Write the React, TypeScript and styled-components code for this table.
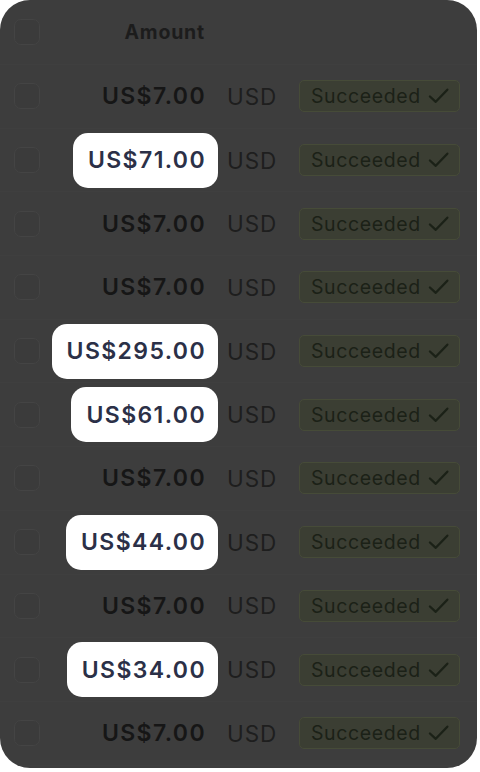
import React from "react";
import styled, { createGlobalStyle } from "styled-components";

const Global = createGlobalStyle`
  html, body { margin: 0; padding: 0; background: #ffffff; }
  body { font-family: Inter, "Noto Sans", "DejaVu Sans", sans-serif; }
`;

const Panel = styled.div`
  width: 477px;
  height: 768px;
  background: #3d3d3d;
  border-radius: 30px;
  overflow: hidden;
  display: flex;
  flex-direction: column;
`;

const Row = styled.div<{ $header?: boolean }>`
  display: grid;
  grid-template-columns: 26px 178px 81px 161px;
  align-items: center;
  padding-left: 14px;
  height: ${(p) => (p.$header ? "65px" : "63.7px")};
  flex: none;
  border-bottom: 1px solid #3f3f3f;
  box-sizing: border-box;
`;

const Check = styled.div`
  width: 26px;
  height: 26px;
  box-sizing: border-box;
  border: 1.5px solid #444444;
  border-radius: 7px;
  background: #3b3b3b;
`;

const AmountCell = styled.div`
  display: flex;
  justify-content: flex-end;
`;

const HeaderLabel = styled.span`
  font-size: 19.5px;
  font-weight: 700;
  color: #1c1c1c;
  padding-right: 13px;
  letter-spacing: 0.8px;
`;

const Amount = styled.span<{ $hi?: boolean }>`
  display: flex;
  align-items: center;
  height: 55px;
  padding: 0 12px 0 15px;
  border-radius: 15px;
  font-size: 23px;
  font-weight: 600;
  letter-spacing: 1.4px;
  color: ${(p) => (p.$hi ? "#2b3047" : "#161616")};
  background: ${(p) => (p.$hi ? "#ffffff" : "transparent")};
`;

const Currency = styled.span`
  padding-left: 9px;
  font-size: 22.5px;
  font-weight: 400;
  color: #1e1e1e;
  letter-spacing: 0.9px;
`;

const Badge = styled.span`
  display: inline-flex;
  align-items: center;
  gap: 7px;
  justify-self: start;
  height: 32px;
  width: 161px;
  box-sizing: border-box;
  padding: 0 10px 0 11px;
  border: 1px solid #464b38;
  border-radius: 5px;
  background: #3b3e33;
  color: #1b2117;
  font-size: 19.5px;
  font-weight: 400;
  letter-spacing: 0.6px;
`;

const CheckIcon = () => (
  <svg width="22" height="20" viewBox="0 0 22 20" fill="none">
    <path d="M2 10.5 L8 16 L20 3.5" stroke="#1b2117" strokeWidth="2.4" strokeLinecap="round" strokeLinejoin="round" />
  </svg>
);

const rows: { amount: string; hi?: boolean }[] = [
  { amount: "US$7.00" },
  { amount: "US$71.00", hi: true },
  { amount: "US$7.00" },
  { amount: "US$7.00" },
  { amount: "US$295.00", hi: true },
  { amount: "US$61.00", hi: true },
  { amount: "US$7.00" },
  { amount: "US$44.00", hi: true },
  { amount: "US$7.00" },
  { amount: "US$34.00", hi: true },
  { amount: "US$7.00" },
];

export default function App() {
  return (
    <>
      <Global />
      <Panel>
        <Row $header>
          <Check />
          <AmountCell>
            <HeaderLabel>Amount</HeaderLabel>
          </AmountCell>
        </Row>
        {rows.map((r, i) => (
          <Row key={i}>
            <Check />
            <AmountCell>
              <Amount $hi={r.hi}>{r.amount}</Amount>
            </AmountCell>
            <Currency>USD</Currency>
            <Badge>
              Succeeded
              <CheckIcon />
            </Badge>
          </Row>
        ))}
      </Panel>
    </>
  );
}
